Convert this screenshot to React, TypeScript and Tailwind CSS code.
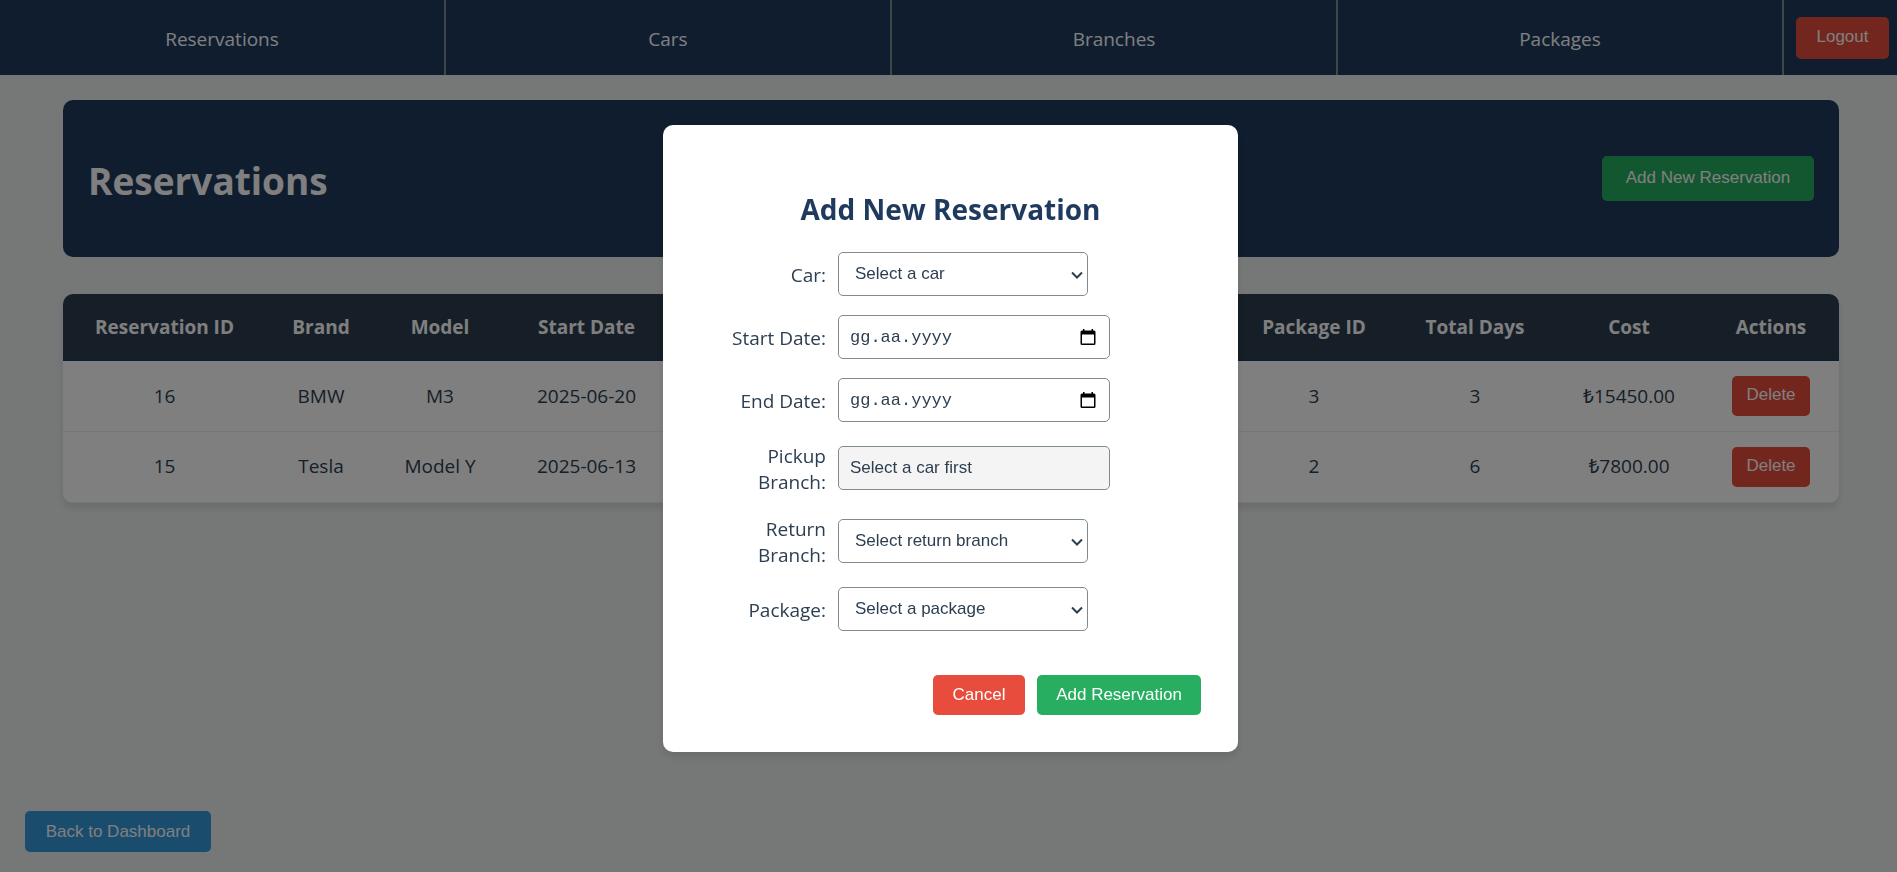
import type { ReactNode } from "react";

const navItems = ["Reservations", "Cars", "Branches", "Packages"];

const reservations = [
  { id: 16, brand: "BMW", model: "M3", start: "2025-06-20", packageId: 3, days: 3, cost: "₺15450.00" },
  { id: 15, brand: "Tesla", model: "Model Y", start: "2025-06-13", packageId: 2, days: 6, cost: "₺7800.00" },
];

const buttonBase =
  "flex items-center justify-center rounded-[5px] font-['Liberation_Sans',sans-serif] text-[17px] leading-5 text-white";

const fieldBase =
  "h-11 rounded-[5px] border border-[#7f8c8d] font-['Liberation_Sans',sans-serif] text-[17px] text-[#2c3e50]";

function FormRow({ id, label, children }: { id: string; label: string; children: ReactNode }) {
  return (
    <div className="grid grid-cols-[101px_1fr] items-center gap-x-3">
      <label htmlFor={id} className="pt-0.5 text-right text-[19px] leading-[26px]">
        {label}
      </label>
      {children}
    </div>
  );
}

function SelectField({ id, label, text }: { id: string; label: string; text: string }) {
  return (
    <FormRow id={id} label={label}>
      <div className="relative w-[250px]">
        <select id={id} className={`${fieldBase} w-full appearance-none bg-white pr-6 pl-4`}>
          <option>{text}</option>
        </select>
        <svg
          className="pointer-events-none absolute top-[19px] right-[5px]"
          width="12"
          height="9"
          viewBox="0 0 12 9"
          fill="none"
          stroke="#2c3e50"
          strokeWidth="2"
        >
          <path d="M1 1.5 6 6.5 11 1.5" />
        </svg>
      </div>
    </FormRow>
  );
}

function DateField({ id, label }: { id: string; label: string }) {
  return (
    <FormRow id={id} label={label}>
      <div className="relative w-[272px]">
        <input
          id={id}
          type="text"
          placeholder="gg.aa.yyyy"
          className="h-11 w-full rounded-[5px] border border-[#7f8c8d] bg-white pr-10 pl-[11px] font-['Liberation_Mono',monospace] text-[17px] text-[#2c3e50] placeholder:text-[#2c3e50]"
        />
        <button type="button" aria-label="Open calendar" className="absolute top-[14px] right-[14px]">
          <svg width="16" height="17" viewBox="0 0 16 17" fill="#000">
            <path
              fillRule="evenodd"
              d="M3 0h1.500v1.500h7V0H13v1.500h1q1.500 0 1.500 1.500v11.500q0 1.500-1.500 1.500H2Q.5 16 .5 14.500V3Q.5 1.500 2 1.500h1zM2 5.500v9h12v-9z"
            />
          </svg>
        </button>
      </div>
    </FormRow>
  );
}

export default function App() {
  return (
    <div className="flex min-h-screen flex-col bg-[#ecf0f1] font-['Open_Sans','Noto_Sans',sans-serif] text-[#2c3e50]">
      <nav className="flex h-[75px] bg-[#1f3a5f]">
        {navItems.map((item) => (
          <a
            key={item}
            href="#"
            className="flex flex-1 items-center justify-center border-r-2 border-[#7f8c8d] pt-1 text-[19px] text-white"
          >
            {item}
          </a>
        ))}
        <div className="flex items-center pr-2 pl-3">
          <button type="button" className={`${buttonBase} h-[42px] w-[93px] bg-[#e74c3c] pb-0.5`}>
            Logout
          </button>
        </div>
      </nav>

      <main className="flex-1 pt-[25px] pr-[58px] pl-[63px]">
        <header className="flex h-[157px] items-center justify-between rounded-[10px] bg-[#1f3a5f] px-[25px]">
          <h1 className="pt-1 text-[37px] font-bold text-white">Reservations</h1>
          <button type="button" className={`${buttonBase} h-[45px] w-[212px] bg-[#27ae60] pb-0.5`}>
            Add New Reservation
          </button>
        </header>

        <div className="mt-[37px] overflow-hidden rounded-[10px] bg-white shadow-[0_5px_8px_rgba(0,0,0,0.1)]">
          <table className="w-full table-fixed border-collapse text-center text-[19px]">
            <colgroup>
              <col className="w-[203px]" />
              <col className="w-[110px]" />
              <col className="w-[128px]" />
              <col className="w-[165px]" />
              <col />
              <col className="w-[162px]" />
              <col className="w-[160px]" />
              <col className="w-[148px]" />
              <col className="w-[136px]" />
            </colgroup>
            <thead>
              <tr className="h-[66px] border-b-2 border-[#1f3a5f] bg-[#2c3e50] text-white">
                <th className="pt-0.5">Reservation ID</th>
                <th className="pt-0.5">Brand</th>
                <th className="pt-0.5">Model</th>
                <th className="pt-0.5">Start Date</th>
                <td />
                <th className="pt-0.5">Package ID</th>
                <th className="pt-0.5">Total Days</th>
                <th className="pt-0.5">Cost</th>
                <th className="pt-0.5">Actions</th>
              </tr>
            </thead>
            <tbody>
              {reservations.map((r) => (
                <tr key={r.id} className="h-[71px] border-b border-[#ecf0f1]">
                  <td>{r.id}</td>
                  <td>{r.brand}</td>
                  <td>{r.model}</td>
                  <td>{r.start}</td>
                  <td />
                  <td>{r.packageId}</td>
                  <td>{r.days}</td>
                  <td>{r.cost}</td>
                  <td>
                    <button type="button" className={`${buttonBase} mx-auto h-10 w-[78px] bg-[#e74c3c] pb-0.5`}>
                      Delete
                    </button>
                  </td>
                </tr>
              ))}
            </tbody>
          </table>
        </div>
      </main>

      <footer className="px-[25px] pb-5">
        <button type="button" className={`${buttonBase} h-[41px] w-[186px] bg-[#3498db]`}>
          Back to Dashboard
        </button>
      </footer>

      <div className="fixed inset-0 flex items-start justify-center bg-black/50 pt-[125px] pr-[59px] pl-[63px]">
        <section
          role="dialog"
          aria-modal="true"
          aria-labelledby="dialog-title"
          className="w-[575px] rounded-[10px] bg-white px-[37px] pt-16 pb-[37px] shadow-[0_5px_8px_rgba(0,0,0,0.1)]"
        >
          <h2 id="dialog-title" className="text-center text-[28px] leading-10 font-bold text-[#1f3a5f]">
            Add New Reservation
          </h2>
          <form className="mt-[23px]">
            <div className="flex flex-col gap-[19px] pl-[25px]">
              <SelectField id="car" label="Car:" text="Select a car" />
              <DateField id="start-date" label="Start Date:" />
              <DateField id="end-date" label="End Date:" />
              <FormRow id="pickup-branch" label="Pickup Branch:">
                <input
                  id="pickup-branch"
                  type="text"
                  readOnly
                  value="Select a car first"
                  className={`${fieldBase} w-[272px] bg-[#f4f4f4] px-[11px]`}
                />
              </FormRow>
              <SelectField id="return-branch" label="Return Branch:" text="Select return branch" />
              <SelectField id="package" label="Package:" text="Select a package" />
            </div>
            <div className="mt-11 flex justify-end gap-3">
              <button type="button" className={`${buttonBase} h-10 w-[92px] bg-[#e74c3c]`}>
                Cancel
              </button>
              <button type="submit" className={`${buttonBase} h-10 w-[164px] bg-[#27ae60]`}>
                Add Reservation
              </button>
            </div>
          </form>
        </section>
      </div>
    </div>
  );
}
